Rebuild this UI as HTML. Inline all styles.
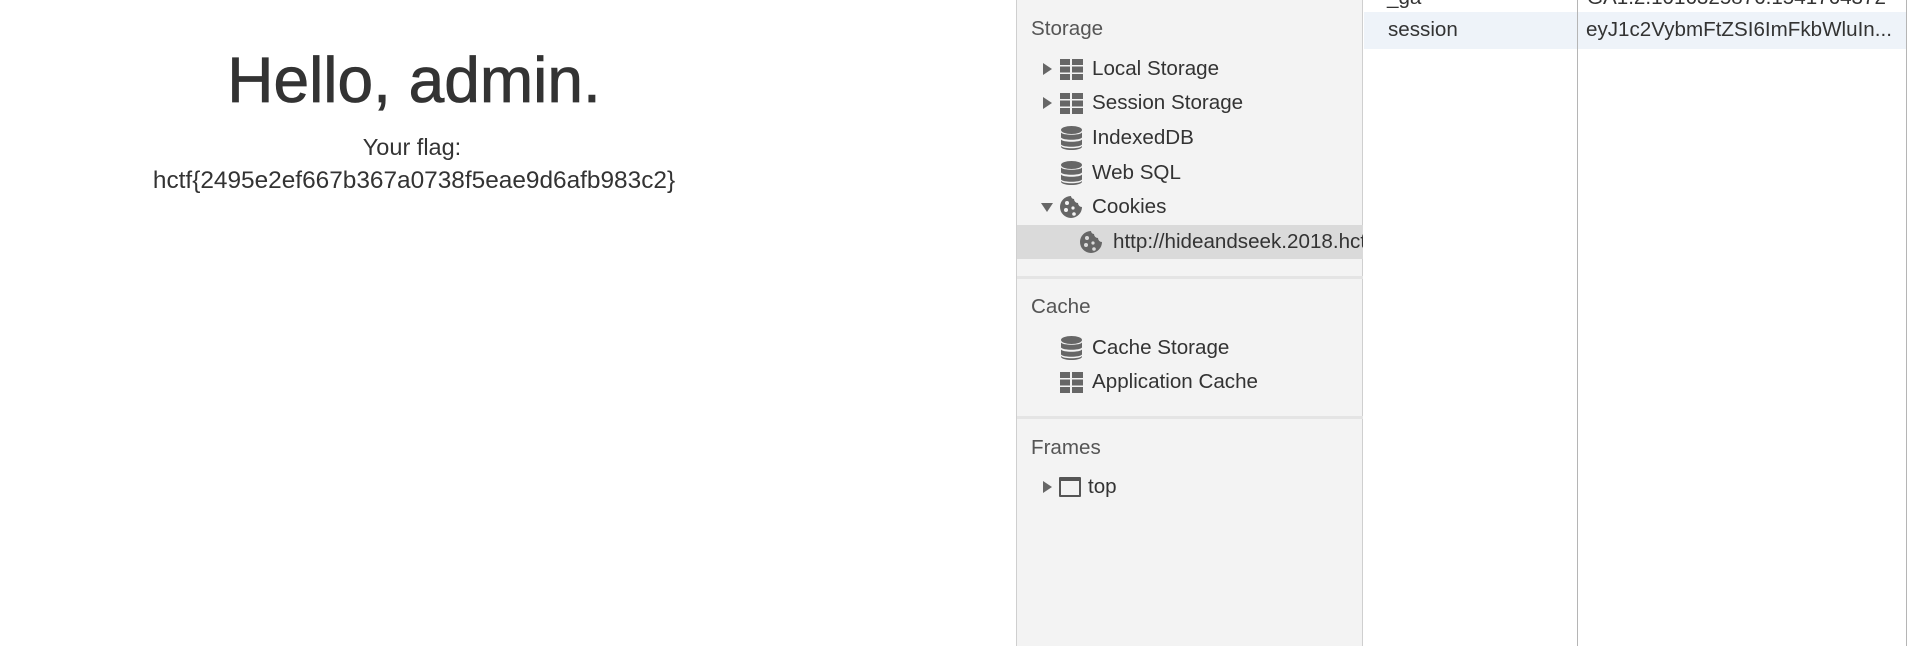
<!DOCTYPE html>
<html><head><meta charset="utf-8"><style>
*{margin:0;padding:0;box-sizing:border-box}
body{width:1920px;height:646px;overflow:hidden;background:#fff;font-family:"Liberation Sans",Arial,sans-serif;position:relative;color:#333}
.abs{position:absolute;white-space:nowrap}
.side{position:absolute;left:1016px;top:0;width:347px;height:646px;background:#f3f3f3;border-left:1px solid #cfcfcf;border-right:1px solid #cfcfcf}
.t{position:absolute;font-size:20.6px;color:#333;line-height:24px;white-space:nowrap}
.h{position:absolute;font-size:20.6px;color:#555;line-height:24px}
.tri{position:absolute;width:0;height:0;border-top:6px solid transparent;border-bottom:6px solid transparent;border-left:9px solid #666}
.trid{position:absolute;width:0;height:0;border-left:6px solid transparent;border-right:6px solid transparent;border-top:9px solid #666}
.sep{position:absolute;left:0;width:346px;height:3px;background:#e4e4e4}
</style></head><body>
<div class="abs" style="left:0;width:828px;top:41px;text-align:center;font-size:64px;line-height:78px;color:#333;-webkit-text-stroke:0.8px #333">Hello, admin.</div>
<div class="abs" style="left:0;width:824px;top:133px;text-align:center;font-size:23.5px;line-height:28px;color:#333">Your flag:</div>
<div class="abs" style="left:0;width:828px;top:167px;text-align:center;font-size:24.4px;line-height:28px;color:#333">hctf{2495e2ef667b367a0738f5eae9d6afb983c2}</div>

<div class="side">
<div class="h" style="left:14px;top:17px">Storage</div>
<div class="tri" style="left:26px;top:63px"></div>
<svg class="abs" style="left:43px;top:59px" width="23" height="21" viewBox="0 0 23 21"><g fill="#666"><rect x="0" y="0" width="10" height="6"/><rect x="12" y="0" width="11" height="6"/><rect x="0" y="7.5" width="10" height="6"/><rect x="12" y="7.5" width="11" height="6"/><rect x="0" y="15" width="10" height="6"/><rect x="12" y="15" width="11" height="6"/></g></svg>
<div class="t" style="left:75px;top:57px">Local Storage</div>
<div class="tri" style="left:26px;top:97px"></div>
<svg class="abs" style="left:43px;top:93px" width="23" height="21" viewBox="0 0 23 21"><g fill="#666"><rect x="0" y="0" width="10" height="6"/><rect x="12" y="0" width="11" height="6"/><rect x="0" y="7.5" width="10" height="6"/><rect x="12" y="7.5" width="11" height="6"/><rect x="0" y="15" width="10" height="6"/><rect x="12" y="15" width="11" height="6"/></g></svg>
<div class="t" style="left:75px;top:91px">Session Storage</div>
<svg class="abs" style="left:44px;top:126px" width="21" height="25" viewBox="0 0 21 25"><g fill="#666"><ellipse cx="10.5" cy="4" rx="10.5" ry="4"/><path d="M0 6.5c2 3 19 3 21 0v5c-2 3-19 3-21 0z"/><path d="M0 13.5c2 3 19 3 21 0v5c-2 3-19 3-21 0z"/><path d="M0 20c2 3 19 3 21 0v1c-2 4-19 4-21 0z"/></g></svg>
<div class="t" style="left:75px;top:126px">IndexedDB</div>
<svg class="abs" style="left:44px;top:161px" width="21" height="25" viewBox="0 0 21 25"><g fill="#666"><ellipse cx="10.5" cy="4" rx="10.5" ry="4"/><path d="M0 6.5c2 3 19 3 21 0v5c-2 3-19 3-21 0z"/><path d="M0 13.5c2 3 19 3 21 0v5c-2 3-19 3-21 0z"/><path d="M0 20c2 3 19 3 21 0v1c-2 4-19 4-21 0z"/></g></svg>
<div class="t" style="left:75px;top:161px">Web SQL</div>
<div class="trid" style="left:24px;top:203px"></div>
<svg class="abs" style="left:42px;top:195px" width="24" height="24" viewBox="0 0 24 24"><path fill="#666" d="M12 1a11 11 0 1 0 11 11 4 4 0 0 1-4-4 4 4 0 0 1-4-4 3 3 0 0 1-3-3z"/><g fill="#f3f3f3"><circle cx="8" cy="8" r="2"/><circle cx="7" cy="15" r="2"/><circle cx="14" cy="13" r="1.6"/><circle cx="15" cy="19" r="1.8"/></g></svg>
<div class="t" style="left:75px;top:195px">Cookies</div>
<div style="position:absolute;left:0;top:225px;width:346px;height:34px;background:#dadada"></div>
<svg class="abs" style="left:62px;top:230px" width="24" height="24" viewBox="0 0 24 24"><path fill="#666" d="M12 1a11 11 0 1 0 11 11 4 4 0 0 1-4-4 4 4 0 0 1-4-4 3 3 0 0 1-3-3z"/><g fill="#dadada"><circle cx="8" cy="8" r="2"/><circle cx="7" cy="15" r="2"/><circle cx="14" cy="13" r="1.6"/><circle cx="15" cy="19" r="1.8"/></g></svg>
<div class="t" style="left:96px;top:230px;width:250px;overflow:hidden">http://hideandseek.2018.hctf.io</div>
<div class="sep" style="top:276px"></div>
<div class="h" style="left:14px;top:295px">Cache</div>
<svg class="abs" style="left:44px;top:336px" width="21" height="25" viewBox="0 0 21 25"><g fill="#666"><ellipse cx="10.5" cy="4" rx="10.5" ry="4"/><path d="M0 6.5c2 3 19 3 21 0v5c-2 3-19 3-21 0z"/><path d="M0 13.5c2 3 19 3 21 0v5c-2 3-19 3-21 0z"/><path d="M0 20c2 3 19 3 21 0v1c-2 4-19 4-21 0z"/></g></svg>
<div class="t" style="left:75px;top:336px">Cache Storage</div>
<svg class="abs" style="left:43px;top:372px" width="23" height="21" viewBox="0 0 23 21"><g fill="#666"><rect x="0" y="0" width="10" height="6"/><rect x="12" y="0" width="11" height="6"/><rect x="0" y="7.5" width="10" height="6"/><rect x="12" y="7.5" width="11" height="6"/><rect x="0" y="15" width="10" height="6"/><rect x="12" y="15" width="11" height="6"/></g></svg>
<div class="t" style="left:75px;top:370px">Application Cache</div>
<div class="sep" style="top:416px"></div>
<div class="h" style="left:14px;top:436px">Frames</div>
<div class="tri" style="left:26px;top:481px"></div>
<div style="position:absolute;left:42px;top:477px;width:22px;height:20px;border:2px solid #555;border-top-width:4px;border-radius:1px"></div>
<div class="t" style="left:71px;top:475px">top</div>
</div>

<div style="position:absolute;left:1364px;top:12px;width:542px;height:37px;background:#eef3f9"></div>
<div class="abs" style="left:1387px;top:-14px;font-size:20.6px;color:#333">_ga</div>
<div class="abs" style="left:1587px;top:-14px;font-size:20.6px;color:#333">GA1.2.1016325876.1541764372</div>
<div class="abs" style="left:1388px;top:18px;font-size:20.6px;line-height:24px;color:#333">session</div>
<div class="abs" style="left:1586px;top:18px;font-size:20.6px;line-height:24px;color:#333">eyJ1c2VybmFtZSI6ImFkbWluIn...</div>
<div style="position:absolute;left:1577px;top:0;width:1px;height:646px;background:#b5b5b5"></div>
<div style="position:absolute;left:1906px;top:0;width:1px;height:646px;background:#b5b5b5"></div>
</body></html>
